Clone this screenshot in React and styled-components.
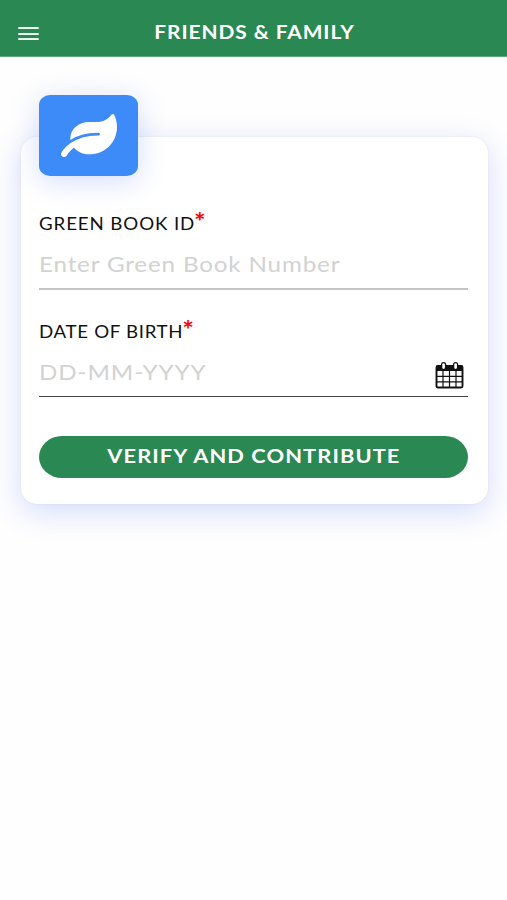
import { createGlobalStyle, styled } from "styled-components"
import { FaLeaf } from "react-icons/fa"

const GlobalStyle = createGlobalStyle`
  * {
    box-sizing: border-box;
  }

  body {
    margin: 0;
    background: #fefefe;
    font-family: Lato, sans-serif;
  }
`

const Page = styled.div`
  min-height: 900px;
  overflow: hidden;
`

const Header = styled.header`
  display: grid;
  grid-template-columns: 61px 1fr 59px;
  align-items: center;
  height: 57px;
  padding-top: 7px;
  background: #2a8852;
  border-bottom: 1px solid #5fa67c;
  color: #fff;
`

const MenuButton = styled.button`
  display: flex;
  flex-direction: column;
  gap: 3.4px;
  width: 21.5px;
  margin: 4px 0 0 17.5px;
  padding: 0;
  border: 0;
  background: none;

  span {
    height: 2px;
    border-radius: 1px;
    background: #eef9f0;
  }
`

const Title = styled.h1`
  margin: 0;
  text-align: center;
  font-size: 18px;
  line-height: 24px;
  font-weight: 700;
  letter-spacing: 0.8px;
  white-space: nowrap;
  transform: scaleX(1.16);
`

const Card = styled.form`
  margin: 80px 19.5px 0 20.5px;
  height: 366.5px;
  padding: 0 19.5px 0 18.5px;
  border-radius: 16px;
  background: #fff;
  box-shadow: 0 8px 30px rgba(65, 95, 235, 0.22), 0 0 2px rgba(60, 60, 110, 0.1);
`

const Badge = styled.div`
  display: flex;
  align-items: center;
  justify-content: center;
  width: 99px;
  height: 81px;
  margin-top: -42px;
  border-radius: 11px / 10px;
  background: #3d8bf9;
  box-shadow: 0 5px 28px rgba(65, 95, 235, 0.22);
  color: #fff;

  svg {
    width: 56px;
    height: 43px;
  }
`

const CardTop = styled.div`
  display: flex;
  height: 75px;
`

const Field = styled.div`
  height: 108px;
  color: #111;
`

const Label = styled.label`
  display: flex;
  height: 24px;
  font-size: 17px;
  line-height: 24px;
  letter-spacing: ${props => props.$spacing};
  white-space: nowrap;
  transform: scaleX(1.1);
  transform-origin: left;
`

const Required = styled.span`
  margin: -3px 0 0 -1px;
  color: #f00;
  font-size: 25px;
  line-height: 24px;
  font-weight: 700;
  letter-spacing: 0;
`

const InputRow = styled.div`
  display: flex;
  align-items: center;
  justify-content: space-between;
  height: ${props => props.$height};
  border-bottom: ${props => props.$line};

  svg {
    flex: none;
    margin: 9px 4px 0 0;
  }
`

const Input = styled.input`
  width: 340px;
  height: 40px;
  padding: 0;
  border: 0;
  outline: 0;
  background: none;
  font-family: inherit;
  font-size: 22px;
  letter-spacing: ${props => props.$spacing};
  transform: translateY(1px) scaleX(1.1);
  transform-origin: left;

  &::placeholder {
    color: #d2d2d2;
    opacity: 1;
  }
`

const Submit = styled.button`
  width: 100%;
  height: 41.5px;
  margin-top: 8px;
  padding: 0 0 2px;
  border: 0;
  border-radius: 23px / 21px;
  background: #2a8852;
  color: #fff;
  font-family: inherit;
  font-size: 19.5px;
  font-weight: 700;
  letter-spacing: 0.95px;
  white-space: nowrap;

  span {
    display: inline-block;
    transform: scaleX(1.12);
  }
`

const CalendarIcon = () => (
  <svg width="29" height="28" viewBox="0 0 29 28">
    <rect x="1.5" y="5" width="26" height="21.5" rx="1.5" fill="#fff" stroke="#111" strokeWidth="1.9" />
    <path d="M1.5 4.5h26v5.5h-26z" fill="#111" />
    <path d="M8 10v16M14.5 10v16M21 10v16M1.5 15.3h26M1.5 20.8h26" stroke="#111" strokeWidth="1.2" />
    <rect x="6.6" y="1.6" width="4" height="7" rx="2" fill="#fff" stroke="#111" strokeWidth="1.3" />
    <rect x="18.6" y="1.6" width="4" height="7" rx="2" fill="#fff" stroke="#111" strokeWidth="1.3" />
  </svg>
)

const App = () => {
  return (
    <Page>
      <GlobalStyle />
      <Header>
        <MenuButton type="button" aria-label="Menu">
          <span />
          <span />
          <span />
        </MenuButton>
        <Title>FRIENDS &amp; FAMILY</Title>
      </Header>

      <Card>
        <CardTop>
          <Badge>
            <FaLeaf preserveAspectRatio="none" />
          </Badge>
        </CardTop>

        <Field>
          <Label htmlFor="book" $spacing="0.8px">
            GREEN BOOK ID<Required>*</Required>
          </Label>
          <InputRow $height="54px" $line="2px solid #c4c4c4">
            <Input id="book" placeholder="Enter Green Book Number" $spacing="0.76px" />
          </InputRow>
        </Field>

        <Field>
          <Label htmlFor="birth" $spacing="0.6px">
            DATE OF BIRTH<Required>*</Required>
          </Label>
          <InputRow $height="53px" $line="1px solid #444">
            <Input id="birth" placeholder="DD-MM-YYYY" $spacing="0.8px" />
            <CalendarIcon />
          </InputRow>
        </Field>

        <Submit type="button">
          <span>VERIFY AND CONTRIBUTE</span>
        </Submit>
      </Card>
    </Page>
  )
}

export default App
